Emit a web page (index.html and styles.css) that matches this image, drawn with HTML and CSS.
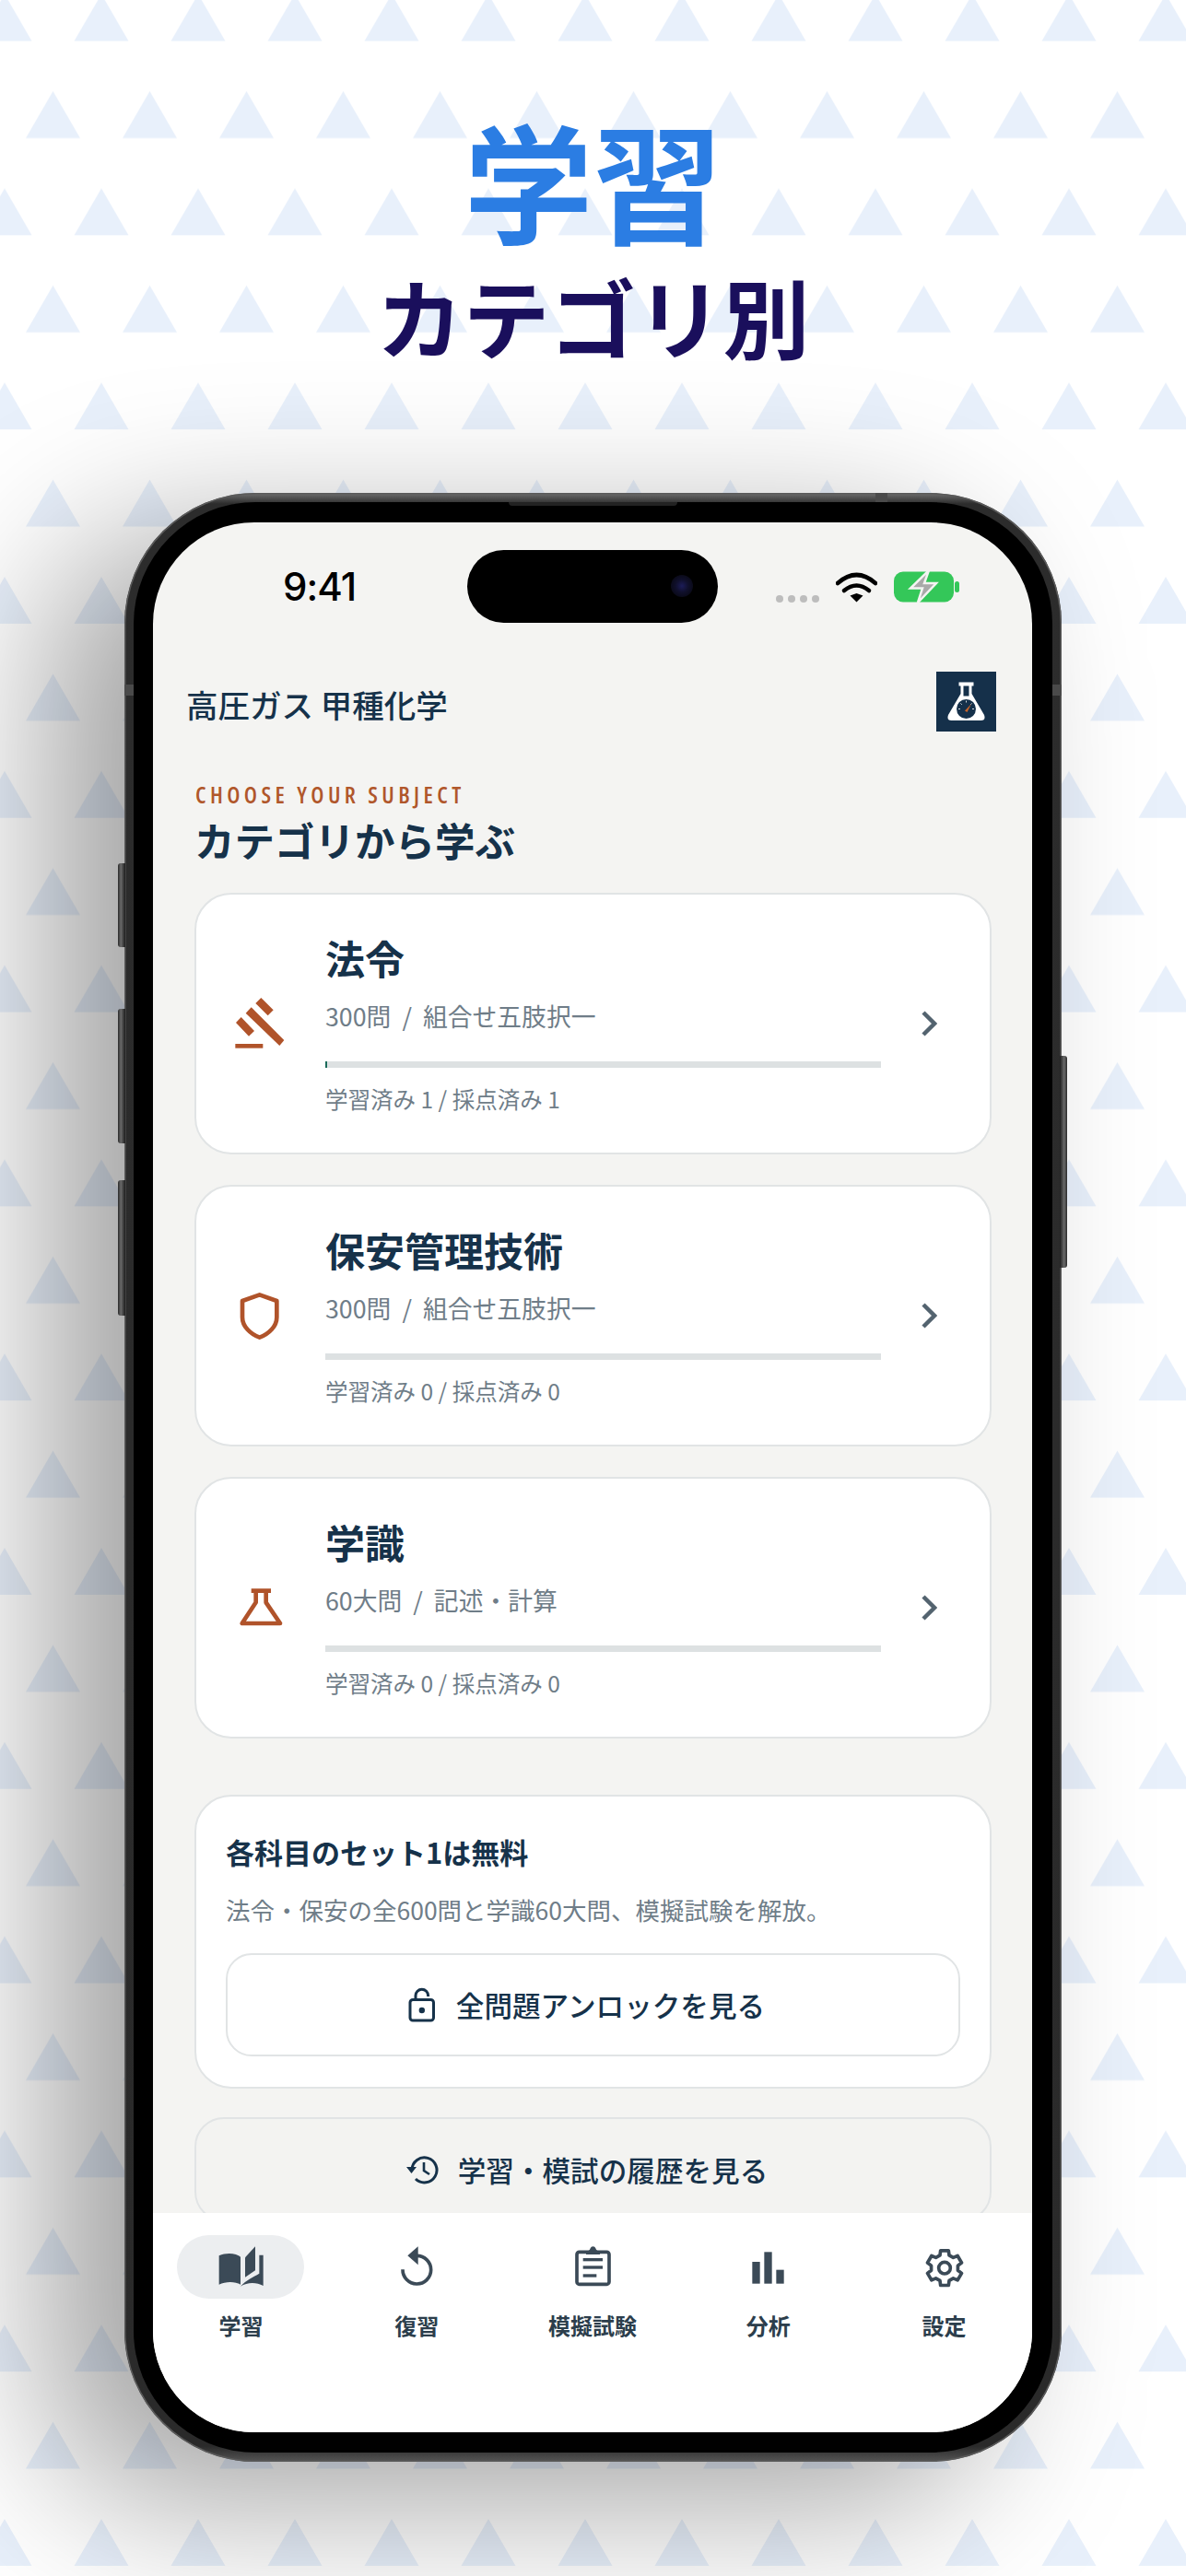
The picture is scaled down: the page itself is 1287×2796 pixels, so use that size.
FILE: index.html
```html
<!DOCTYPE html>
<html lang="ja">
  <head>
    <meta charset="UTF-8" />
    <title>学習 カテゴリ別</title>
    <link rel="stylesheet" href="styles.css">
  </head>
  <body>
    <!-- triangle wallpaper -->
    <svg class="wallpaper" width="1287" height="2796" aria-hidden="true">
      <defs>
        <pattern id="tri" x="0" y="-6.4" width="105" height="210.8" patternUnits="userSpaceOnUse">
          <polygon points="5,0 34.5,51 -24.5,51" />
          <polygon points="110,0 139.5,51 80.5,51" />
          <polygon points="57.5,105.4 87,156.4 28,156.4" />
        </pattern>
      </defs>
      <rect width="1287" height="2796" fill="url(#tri)" />
    </svg>

    <div class="page">
      <header class="hero">
        <h1 class="hero-title">学習</h1>
        <p class="hero-sub">カテゴリ別</p>
      </header>

      <div class="phone">
        <span class="side-btn btn-mute"></span>
        <span class="side-btn btn-up"></span>
        <span class="side-btn btn-down"></span>
        <span class="side-btn btn-power"></span>
        <span class="band band-left"></span>
        <span class="band band-right"></span>
        <span class="band band-top"></span>
        <div class="bezel">
          <span class="speaker"></span>
          <div class="screen">
            <div class="status-bar">
              <span class="clock">9:41</span>
              <div class="island"><span class="camera"></span></div>
              <div class="status-icons">
                <div class="signal-dots"><i></i><i></i><i></i><i></i></div>
                <svg width="45" height="34" viewBox="0 0 45 34">
                  <path d="M2 13 Q22.5 -5 43 13" fill="none" stroke="#000" stroke-width="4.6" stroke-linecap="round" />
                  <path d="M9 21 Q22.5 10 36 21" fill="none" stroke="#000" stroke-width="4.6" stroke-linecap="round" />
                  <polygon points="15.5,26.5 22.5,24 29.5,26.5 22.5,33.5" fill="#000" />
                </svg>
                <svg width="71" height="34" viewBox="0 0 71 34">
                  <rect x="0" y="0.5" width="65" height="33" rx="10" fill="#34c759" />
                  <rect x="66" y="11" width="5" height="12" rx="2.5" fill="#34c759" />
                  <polygon points="38,-1 18,18.5 31,18.5 26,34 46,13 33,13" fill="#a9a9a9" stroke="#f4f4f2" stroke-width="2.5" />
                </svg>
              </div>
            </div>

            <div class="app-header">
              <span class="app-name">高圧ガス 甲種化学</span>
              <svg class="app-logo" width="65" height="65" viewBox="0 0 65 65">
                <rect width="65" height="65" fill="#15304a" />
                <path d="M24.5 11.5 H40.5 V15.5 H38.5 V24 L52 47 Q54 53 48.5 53 H16.5 Q11 53 13 47 L26.5 24 V15.5 H24.5 Z" fill="#fff" />
                <rect x="29.5" y="15.5" width="6" height="11" fill="#15304a" />
                <circle cx="32.5" cy="40.5" r="10.5" fill="#15304a" />
                <path d="M32.5 31.5 V33.5 M24 40.5 H26 M41 40.5 H39 M26.4 34.4 L27.8 35.8 M38.6 34.4 L37.2 35.8" stroke="#cfd6db" stroke-width="1" />
                <path d="M31 42.5 L38 35 L33.5 44 Z" fill="#c8642a" />
              </svg>
            </div>

            <main class="content">
              <p class="eyebrow">CHOOSE YOUR SUBJECT</p>
              <h2 class="section-title">カテゴリから学ぶ</h2>

              <div class="subject-list">
                <a class="subject-card">
                  <svg class="subject-icon" viewBox="6 36 240 240">
                    <polygon points="80,122 98,103 205,210 190,228" />
                    <polygon points="112,90 130,72 170,112 152,130" />
                    <polygon points="48,153 65,135 108,180 90,197" />
                    <rect x="46" y="222" width="90" height="14" />
                  </svg>
                  <div class="subject-body">
                    <h3 class="subject-name">法令</h3>
                    <p class="subject-meta">300問&nbsp;&nbsp;/&nbsp;&nbsp;組合せ五肢択一</p>
                    <div class="progress"><div class="progress-fill" style="width: 0.4%"></div></div>
                    <p class="subject-stat">学習済み 1 / 採点済み 1</p>
                  </div>
                  <svg class="chevron" width="18" height="28" viewBox="0 0 18 28"><path d="M3 2 L15 14 L3 26" /></svg>
                </a>

                <a class="subject-card">
                  <svg class="subject-icon outline" viewBox="6 0 240 240">
                    <path d="M125 52 L181 72 V125 C181 155 155 180 125 191 C95 180 69 155 69 125 V72 Z" />
                  </svg>
                  <div class="subject-body">
                    <h3 class="subject-name">保安管理技術</h3>
                    <p class="subject-meta">300問&nbsp;&nbsp;/&nbsp;&nbsp;組合せ五肢択一</p>
                    <div class="progress"></div>
                    <p class="subject-stat">学習済み 0 / 採点済み 0</p>
                  </div>
                  <svg class="chevron" width="18" height="28" viewBox="0 0 18 28"><path d="M3 2 L15 14 L3 26" /></svg>
                </a>

                <a class="subject-card">
                  <svg class="subject-icon outline" viewBox="6 15 240 240">
                    <path d="M98 80 H162 M113 80 V118 L68 186 H192 L146 118 V80" />
                  </svg>
                  <div class="subject-body">
                    <h3 class="subject-name">学識</h3>
                    <p class="subject-meta">60大問&nbsp;&nbsp;/&nbsp;&nbsp;記述・計算</p>
                    <div class="progress"></div>
                    <p class="subject-stat">学習済み 0 / 採点済み 0</p>
                  </div>
                  <svg class="chevron" width="18" height="28" viewBox="0 0 18 28"><path d="M3 2 L15 14 L3 26" /></svg>
                </a>
              </div>

              <section class="free-card">
                <h3 class="free-title">各科目のセット1は無料</h3>
                <p class="free-desc">法令・保安の全600問と学識60大問、模擬試験を解放。</p>
                <a class="action-btn unlock-btn">
                  <svg width="30" height="38" viewBox="0 0 30 38">
                    <path d="M8 13 V9 A6.8 6.8 0 0 1 21.6 9 V10" fill="none" stroke="#16324a" stroke-width="3" />
                    <rect x="2" y="13.5" width="25.5" height="22.5" rx="3" fill="none" stroke="#16324a" stroke-width="3" />
                    <circle cx="14.8" cy="25" r="3.2" fill="#16324a" />
                  </svg>
                  全問題アンロックを見る
                </a>
              </section>

              <a class="action-btn history-btn">
                <svg width="36" height="34" viewBox="0 0 36 34">
                  <path d="M7 17 A13.5 13.5 0 1 1 11 27" fill="none" stroke="#16324a" stroke-width="3" />
                  <polygon points="1,14 12,14 6.5,21" fill="#16324a" />
                  <path d="M20 9 V18 L26 22" fill="none" stroke="#16324a" stroke-width="2.6" />
                </svg>
                学習・模試の履歴を見る
              </a>
            </main>

            <nav class="tab-bar">
              <a class="tab active">
                <span class="tab-icon">
                  <svg width="60" height="60" viewBox="123 30 180 180">
                    <path d="M143 82 C165 72 195 72 213 86 V176 C195 165 165 165 143 176 Z" />
                    <path d="M228 88 L261 52 V130 L228 152 Z" />
                    <path d="M274 80 H287 V180 C265 168 235 168 213 182 C232 160 255 152 274 140 Z" />
                  </svg>
                </span>
                <span class="tab-label">学習</span>
              </a>
              <a class="tab">
                <span class="tab-icon">
                  <svg width="60" height="60" viewBox="696 30 180 180">
                    <path d="M787 82 A46 46 0 1 1 741 127" fill="none" stroke-width="11" />
                    <polygon points="757,82 791,52 791,112" />
                  </svg>
                </span>
                <span class="tab-label">復習</span>
              </a>
              <a class="tab">
                <span class="tab-icon">
                  <svg width="60" height="60" viewBox="1269 30 180 180">
                    <rect x="1308" y="70" width="105" height="105" rx="8" fill="none" stroke-width="11" />
                    <path d="M1338 70 C1345 66 1350 66 1352 58 A9 9 0 0 1 1369 58 C1371 66 1376 66 1383 70 V78 H1338 Z" />
                    <rect x="1328" y="90" width="64" height="10" />
                    <rect x="1328" y="115" width="64" height="10" />
                    <rect x="1328" y="142" width="44" height="10" />
                  </svg>
                </span>
                <span class="tab-label">模擬試験</span>
              </a>
              <a class="tab">
                <span class="tab-icon">
                  <svg width="60" height="60" viewBox="75 30 180 180">
                    <rect x="112" y="102" width="25" height="71" />
                    <rect x="151" y="70" width="25" height="103" />
                    <rect x="190" y="128" width="25" height="45" />
                  </svg>
                </span>
                <span class="tab-label">分析</span>
              </a>
              <a class="tab">
                <span class="tab-icon">
                  <svg width="60" height="60" viewBox="0 0 180 180">
                    <g transform="translate(90 92)" fill="none" stroke-width="11" stroke-linejoin="round">
                      <polygon points="-15,-41.3 -13,-56.5 13,-56.5 15,-41.3 28.3,-33.7 42.4,-39.6 55.5,-17 43.3,-7.6 43.3,7.6 55.5,17 42.4,39.6 28.3,33.7 15,41.3 13,56.5 -13,56.5 -15,41.3 -28.3,33.7 -42.4,39.6 -55.5,17 -43.3,7.6 -43.3,-7.6 -55.5,-17 -42.4,-39.6 -28.3,-33.7" />
                      <circle r="19" />
                    </g>
                  </svg>
                </span>
                <span class="tab-label">設定</span>
              </a>
            </nav>
          </div>
        </div>
      </div>
    </div>
  </body>
</html>
```

FILE: styles.css
```css
/* Page and wallpaper */
body {
  margin: 0;
  background-color: #ffffff;
  font-family: "Noto Sans CJK JP", "Noto Sans", sans-serif;
  color: #16324a;
}

h1, h2, h3, p {
  margin: 0;
}

.wallpaper {
  position: absolute;
  top: 0;
  left: 0;
}

.wallpaper polygon {
  fill: #e8f0fb;
}

.page {
  position: relative;
  width: 1287px;
  height: 2796px;
  overflow: hidden;
}

.hero {
  padding-top: 122px;
  text-align: center;
}

.hero-title {
  font-size: 140px;
  line-height: 142px;
  font-weight: 700;
  color: #2b7de3;
}

.hero-sub {
  margin-top: 31px;
  font-size: 94px;
  line-height: 94px;
  font-weight: 700;
  color: #1a0f5c;
}

/* Phone frame */
.phone {
  position: relative;
  box-sizing: border-box;
  width: 1017px;
  height: 2137px;
  margin: 146px 0 0 135px;
  padding: 10px;
  border-radius: 142px;
  background: linear-gradient(180deg, #6f6f6f 0, #2c2c2c 12px, #2a2a2a 2120px, #555 100%);
  box-shadow: -85px 45px 170px rgba(0, 0, 0, 0.36), inset 0 0 0 1.5px #5a5a5a;
}

.bezel {
  position: relative;
  box-sizing: border-box;
  height: 100%;
  padding: 22px 22px 22px 21px;
  border-radius: 132px;
  background-color: #000000;
}

.side-btn {
  position: absolute;
  width: 8px;
  border-radius: 3px 0 0 3px;
  background: linear-gradient(90deg, #2a2a2a, #6a6a6a 40%, #1c1c1c);
}

.btn-mute { left: -7px; top: 402px; height: 91px; }
.btn-up { left: -7px; top: 560px; height: 146px; }
.btn-down { left: -7px; top: 746px; height: 147px; }

.btn-power {
  right: -6px;
  top: 611px;
  height: 230px;
  border-radius: 0 3px 3px 0;
  background: linear-gradient(270deg, #2a2a2a, #6a6a6a 40%, #1c1c1c);
}

.band {
  position: absolute;
  background-color: #4a4a4a;
}

.band-left { left: 0; top: 208px; width: 10px; height: 12px; }
.band-right { right: 0; top: 208px; width: 10px; height: 12px; }
.band-top { left: 815px; top: 0; width: 13px; height: 10px; }

.speaker {
  position: absolute;
  left: 407px;
  top: 0;
  width: 183px;
  height: 4px;
  border-radius: 0 0 4px 4px;
  background-color: #222222;
}

.screen {
  display: flex;
  flex-direction: column;
  height: 100%;
  border-radius: 110px;
  overflow: hidden;
  background-color: #f4f4f2;
}

/* Status bar */
.status-bar {
  display: flex;
  align-items: center;
  flex-shrink: 0;
  height: 79px;
  margin-top: 30px;
  padding-left: 141px;
}

.clock {
  width: 80px;
  margin-right: 120px;
  font-family: "Inter", sans-serif;
  font-size: 42px;
  font-weight: 500;
  letter-spacing: -1px;
  color: #000000;
  white-space: nowrap;
}

.island {
  position: relative;
  width: 272px;
  height: 79px;
  border-radius: 40px;
  background-color: #000000;
}

.camera {
  position: absolute;
  right: 27px;
  top: 27px;
  width: 24px;
  height: 24px;
  border-radius: 50%;
  background: radial-gradient(circle, #1c1c58 0, #10102c 40%, #050508 100%);
}

.status-icons {
  display: flex;
  align-items: flex-end;
  gap: 18px;
  margin-left: 63px;
}

.signal-dots {
  display: flex;
  gap: 5px;
}

.signal-dots i {
  width: 8px;
  height: 8px;
  border-radius: 50%;
  background-color: #bdbdbd;
}

/* App header */
.app-header {
  display: flex;
  align-items: flex-start;
  justify-content: space-between;
  flex-shrink: 0;
  margin-top: 53px;
  padding: 0 39px 0 36px;
}

.app-name {
  font-size: 34.5px;
  font-weight: 500;
  line-height: 65px;
  padding-top: 3px;
}

.app-logo {
  display: block;
}

/* Content */
.content {
  flex: 1;
  min-height: 0;
  overflow: hidden;
  padding: 0 44px 0 45px;
}

.eyebrow {
  margin-top: 51px;
  padding-left: 1px;
  font-family: "Open Sans", sans-serif;
  font-stretch: 75%;
  font-size: 25px;
  line-height: 28px;
  font-weight: 600;
  letter-spacing: 4.4px;
  color: #b0572b;
}

.section-title {
  margin-top: 7px;
  font-size: 43.5px;
  line-height: 58px;
  font-weight: 600;
}

.subject-list {
  display: flex;
  flex-direction: column;
  gap: 33px;
  margin-top: 28px;
}

.subject-card {
  display: flex;
  align-items: center;
  box-sizing: border-box;
  height: 284px;
  padding-left: 29px;
  border: 2px solid #e1e4e5;
  border-radius: 40px;
  background-color: #ffffff;
}

.subject-icon {
  flex-shrink: 0;
  width: 80px;
  height: 80px;
  fill: #b0532a;
}

.subject-icon.outline {
  fill: none;
  stroke: #b0532a;
  stroke-width: 14;
  stroke-linejoin: round;
}

.subject-body {
  width: 603px;
  margin-left: 31px;
  padding-top: 2px;
}

.subject-name {
  font-size: 43px;
  line-height: 50px;
  font-weight: 700;
}

.subject-meta {
  margin-top: 21px;
  font-size: 26.8px;
  line-height: 36px;
  color: #6f7d88;
  white-space: nowrap;
}

.progress {
  height: 7px;
  margin-top: 31px;
  background-color: #dde1e2;
}

.progress-fill {
  height: 100%;
  background-color: #1a6b5a;
}

.subject-stat {
  margin-top: 17px;
  font-size: 24.5px;
  line-height: 34px;
  color: #6f7d88;
}

.chevron {
  flex-shrink: 0;
  margin-left: 43px;
  fill: none;
  stroke: #53636f;
  stroke-width: 4.5;
}

/* Free set card */
.free-card {
  box-sizing: border-box;
  height: 319px;
  margin-top: 61px;
  padding: 38px 32px 0;
  border: 2px solid #e1e4e5;
  border-radius: 40px;
  background-color: #ffffff;
}

.free-title {
  font-size: 31px;
  line-height: 44px;
  font-weight: 700;
}

.free-desc {
  margin-top: 22px;
  font-size: 26.5px;
  line-height: 38px;
  color: #6f7d88;
  white-space: nowrap;
}

.action-btn {
  display: flex;
  align-items: center;
  justify-content: center;
  box-sizing: border-box;
  border: 2px solid #e1e4e5;
  font-size: 30.6px;
  font-weight: 500;
  white-space: nowrap;
}

.unlock-btn {
  gap: 22px;
  height: 112px;
  margin-top: 28px;
  padding-right: 14px;
  border-radius: 28px;
}

.history-btn {
  gap: 21px;
  height: 113px;
  margin-top: 31px;
  padding-right: 14px;
  border-radius: 32px;
  background-color: #f3f3f1;
}

/* Tab bar */
.tab-bar {
  display: flex;
  flex-shrink: 0;
  height: 238px;
  box-sizing: border-box;
  padding-top: 24px;
  background-color: #ffffff;
}

.tab {
  display: flex;
  flex-direction: column;
  align-items: center;
  flex: 1;
}

.tab-icon {
  display: flex;
  align-items: center;
  justify-content: center;
  width: 138px;
  height: 69px;
  border-radius: 35px;
}

.tab-icon svg {
  display: block;
  fill: #3b4a57;
  stroke: #3b4a57;
  stroke-width: 0;
}

.tab.active .tab-icon {
  background-color: #eceef0;
}

.tab-label {
  margin-top: 13px;
  font-size: 24px;
  line-height: 32px;
  font-weight: 600;
  color: #2c3e4c;
}
```
